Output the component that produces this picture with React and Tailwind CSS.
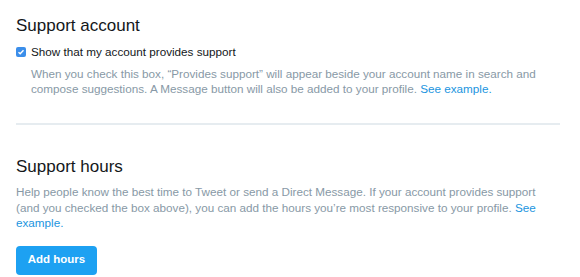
export default function App() {
  return (
    <div className="w-[580px] h-[277px] bg-white overflow-hidden font-['Liberation_Sans',Arial,sans-serif] px-4 pt-[14px]">
      {/* Support account */}
      <section>
        <h2 className="text-[17px] leading-[24px] text-[#14171a]">Support account</h2>
        <label className="mt-[7px] flex items-center gap-[5px] text-[11.7px] leading-[14px] text-[#14171a]">
          <span className="w-[10px] h-[10px] rounded-[2px] bg-[#3b8eea] flex items-center justify-center">
            <svg width="8" height="8" viewBox="0 0 8 8">
              <path d="M1.5 4.2 L3.2 5.8 L6.5 2.2" stroke="white" strokeWidth="1.4" fill="none" />
            </svg>
          </span>
          Show that my account provides support
        </label>
        <p className="mt-[7px] ml-[15px] text-[11.7px] leading-[15px] text-[#8899a6] w-[515px]">
          When you check this box, “Provides support” will appear beside your account name in search and compose suggestions. A Message button will also be added to your profile.{" "}
          <a className="text-[#1b95e0]">See example.</a>
        </p>
      </section>

      <div className="mt-[27px] h-[2px] bg-[#e6ecf0] w-[544px]" />

      {/* Support hours */}
      <section className="mt-[30px]">
        <h2 className="text-[17px] leading-[24px] text-[#14171a]">Support hours</h2>
        <p className="mt-[5px] text-[11.7px] leading-[15.5px] text-[#8899a6] w-[530px]">
          Help people know the best time to Tweet or send a Direct Message. If your account provides support (and you checked the box above), you can add the hours you’re most responsive to your profile.{" "}
          <a className="text-[#1b95e0]">See example.</a>
        </p>
        <button className="mt-[15px] w-[81px] h-[29px] rounded-[4px] bg-[#1da1f2] text-white text-[11.5px] font-bold">
          Add hours
        </button>
      </section>
    </div>
  );
}
